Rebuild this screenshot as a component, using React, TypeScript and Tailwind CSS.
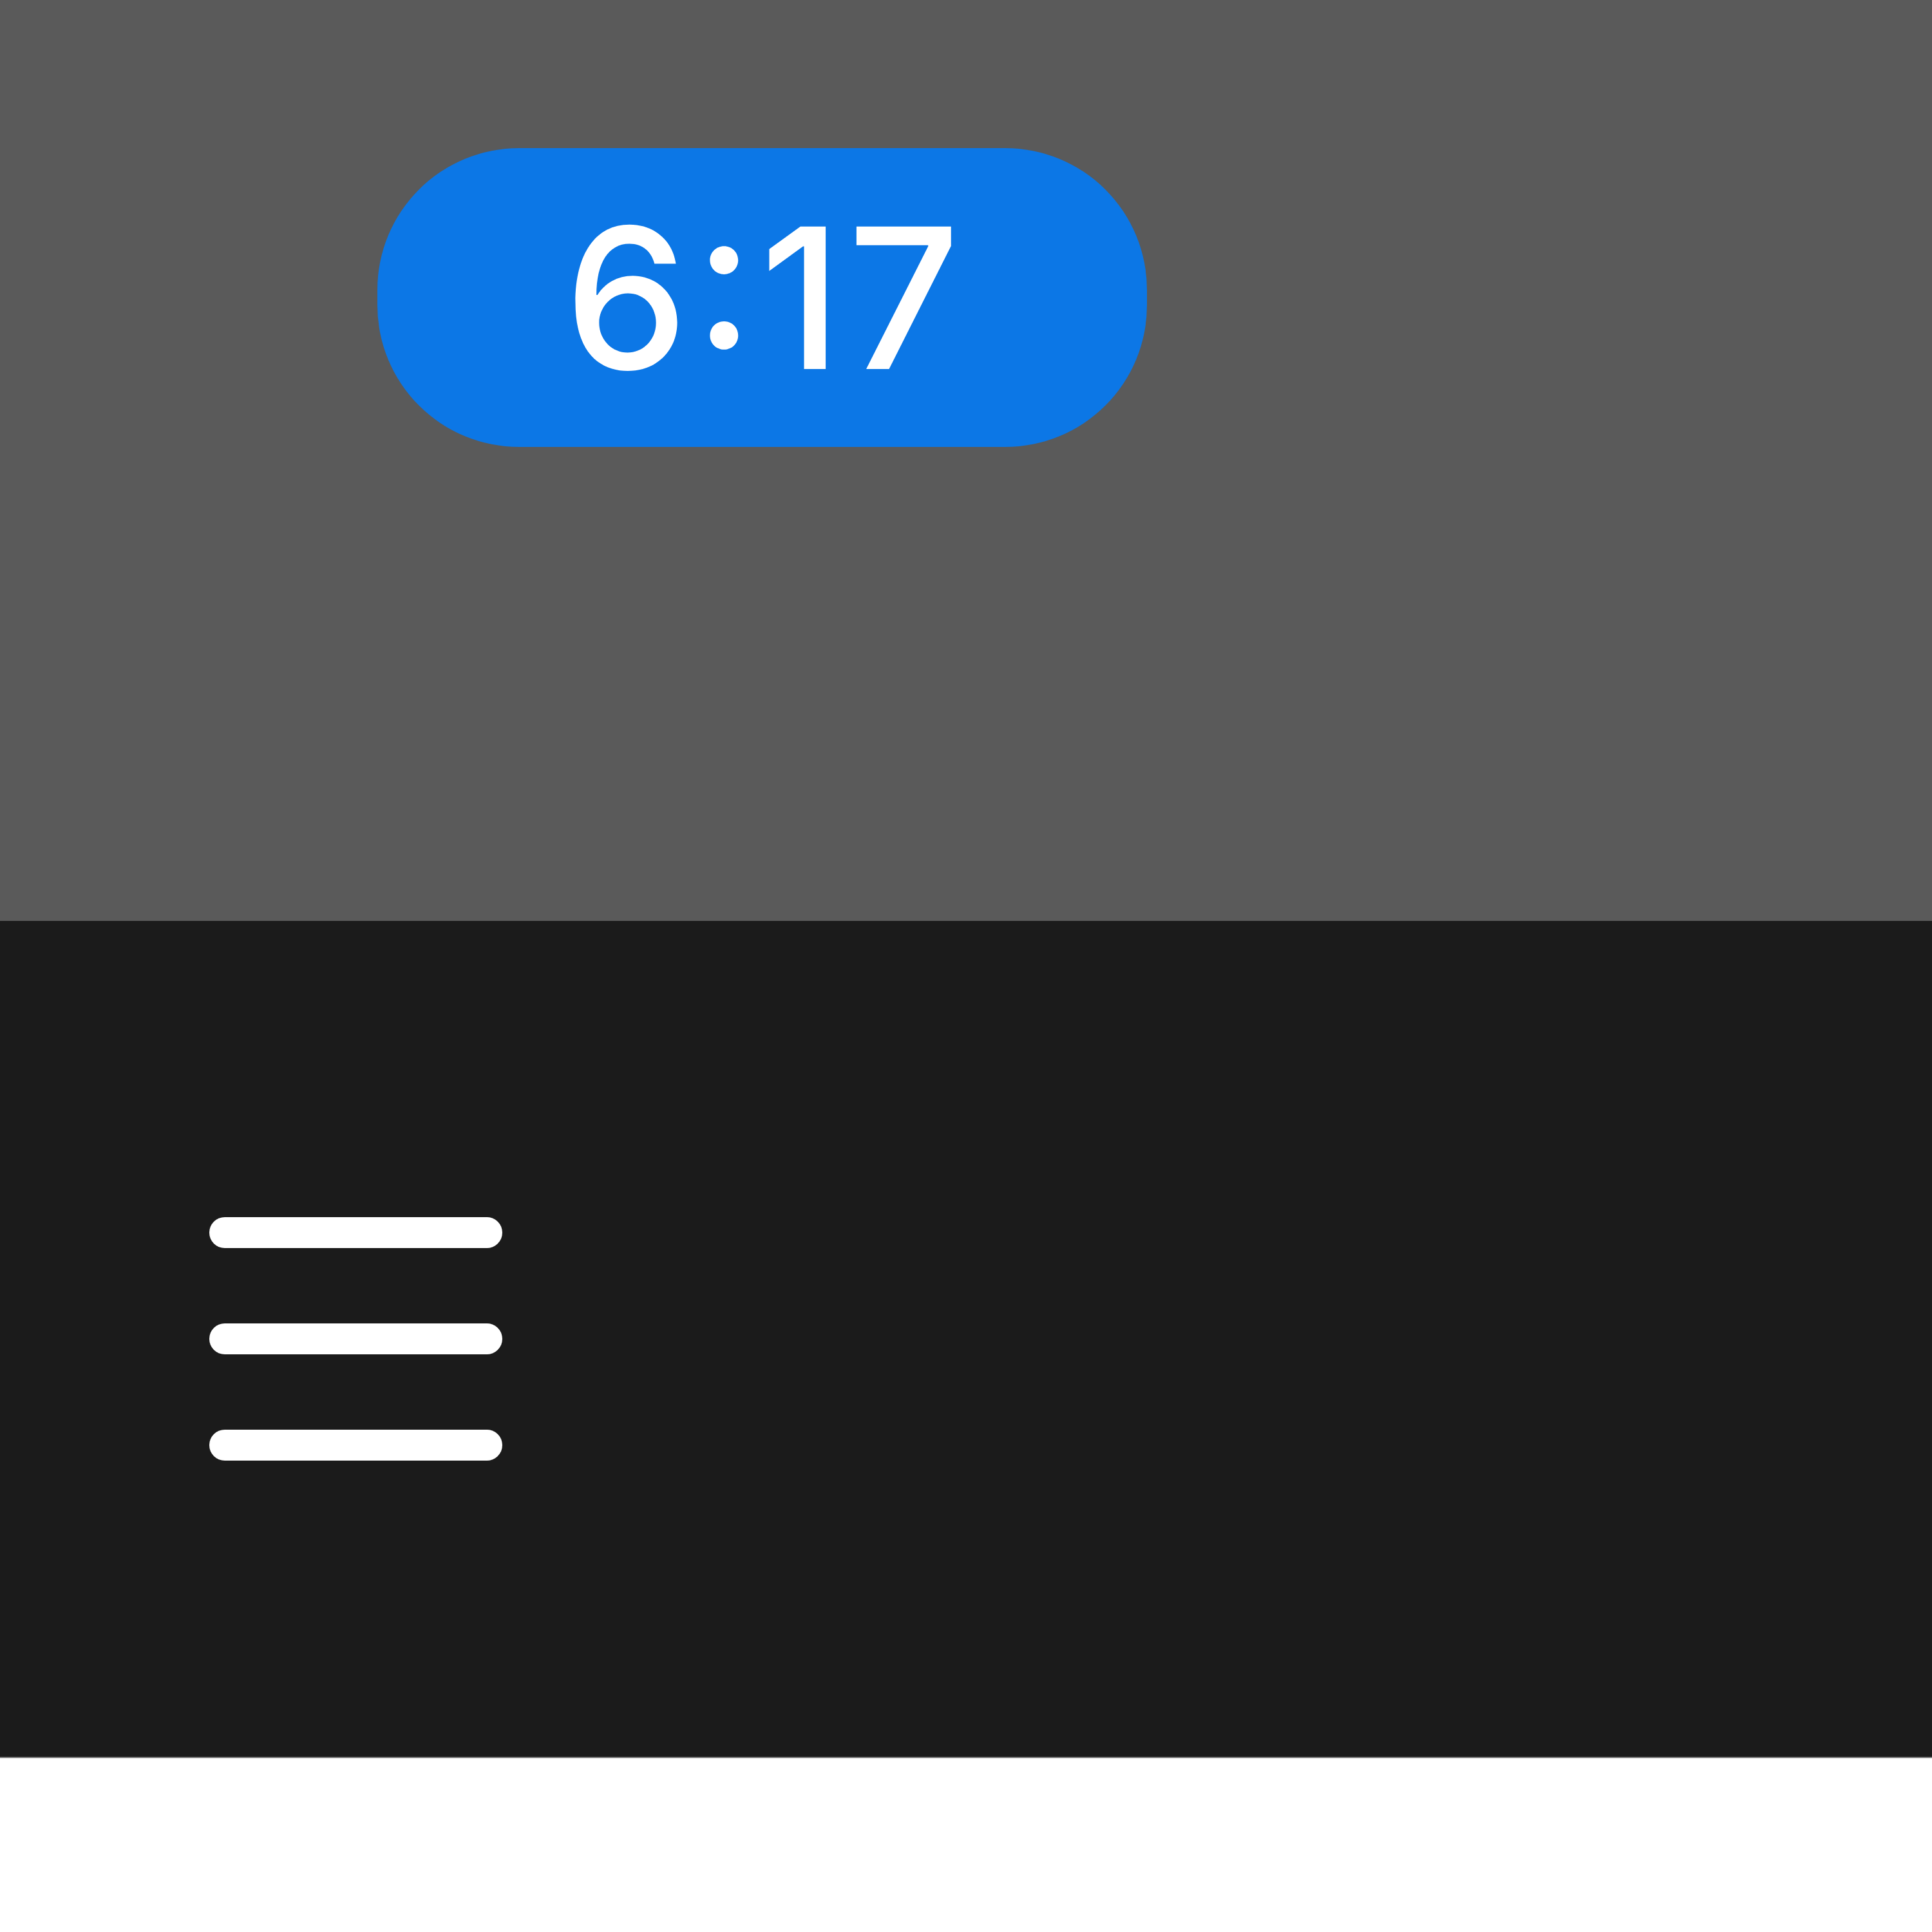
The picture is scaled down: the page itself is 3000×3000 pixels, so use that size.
export default function App() {
    return (
        <div className="w-[3000px] h-[3000px] flex flex-col bg-white font-['Inter','Liberation_Sans',sans-serif]">
            <div className="h-[1430px] bg-[#5a5a5a] pl-[586px] pt-[230px]">
                <div className="w-[1195px] h-[464px] rounded-[220px] bg-[#0c77e6] flex items-center justify-center">
                    <span className="text-white text-[304px] leading-none font-medium tracking-[10px] pl-[10px] [font-feature-settings:'case']">6:17</span>
                </div>
            </div>
            <div className="h-[1300px] bg-[#1b1b1b] border-b-2 border-[#7a7a7a] flex items-center pl-[325px]">
                <div className="flex flex-col gap-[117px]">
                    <div className="w-[455px] h-[48px] rounded-full bg-white" />
                    <div className="w-[455px] h-[48px] rounded-full bg-white" />
                    <div className="w-[455px] h-[48px] rounded-full bg-white" />
                </div>
            </div>
        </div>
    )
}
